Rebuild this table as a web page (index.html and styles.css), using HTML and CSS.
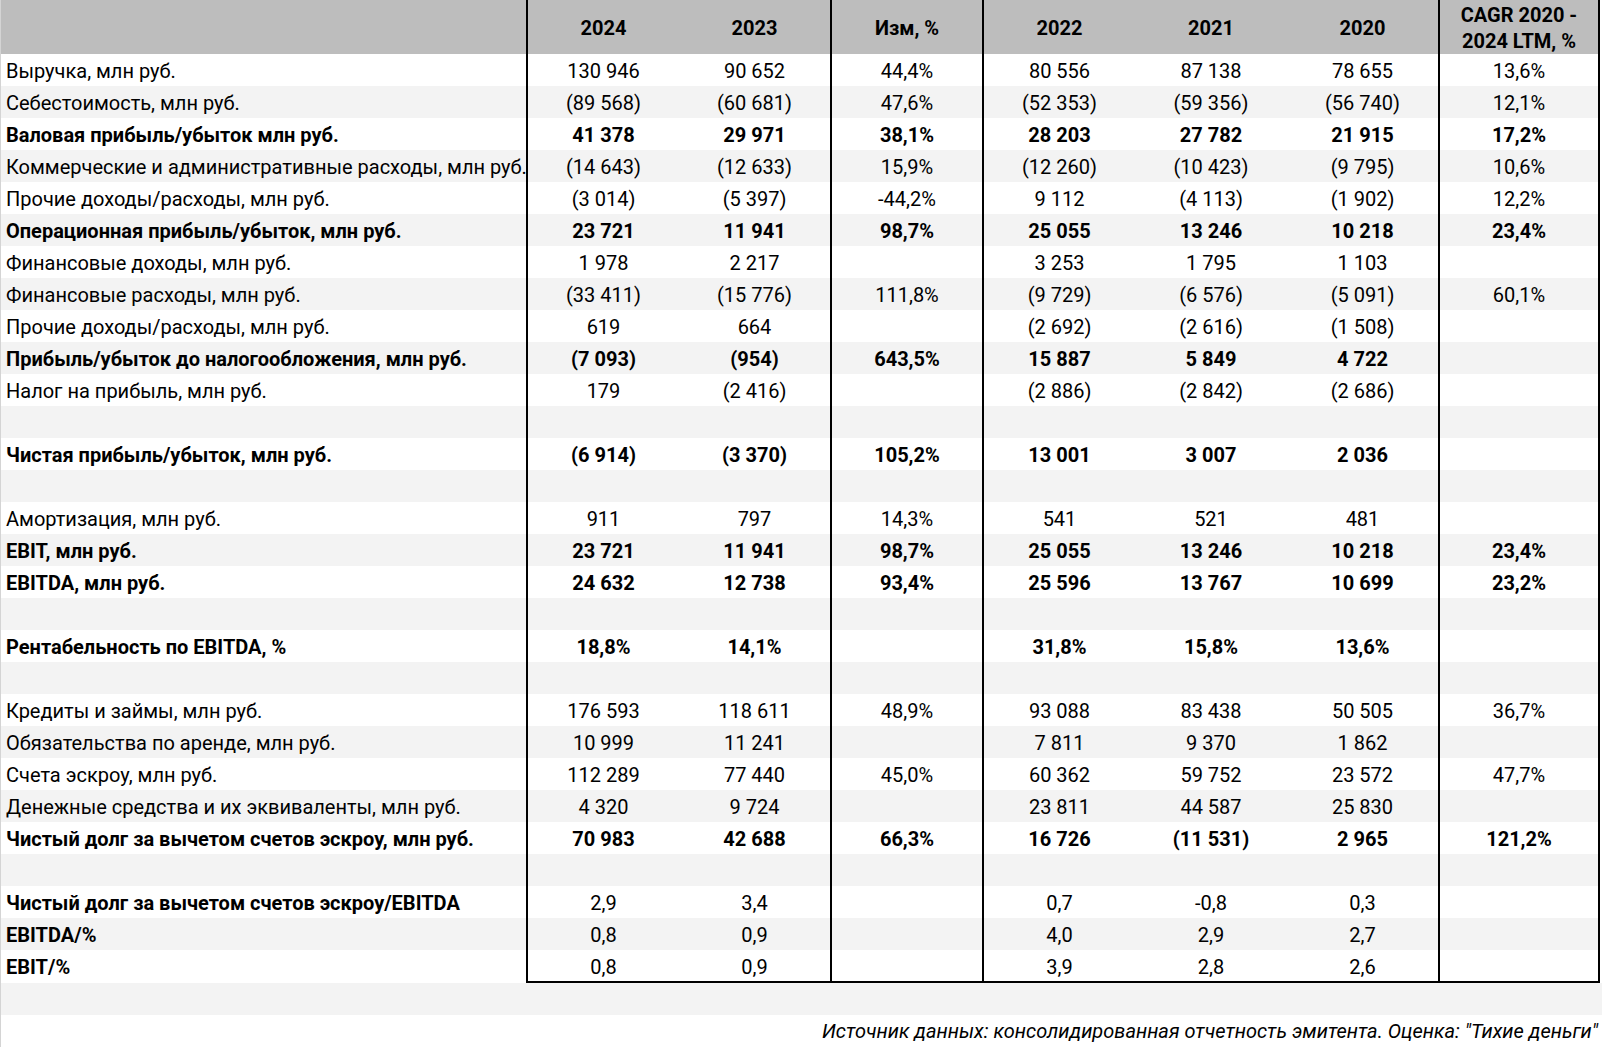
FILE: index.html
```html
<!DOCTYPE html>
<html lang="ru">
<head>
<meta charset="utf-8">
<title>Финансовые показатели</title>
<link rel="stylesheet" href="styles.css">
</head>
<body>
<div class="page">
<table class="fin">
<colgroup>
<col class="c-label"><col class="c-num"><col class="c-num"><col class="c-num"><col class="c-num"><col class="c-num"><col class="c-num"><col class="c-cagr">
</colgroup>
<thead>
<tr>
<th class="lbl"></th>
<th class="gl">2024</th>
<th>2023</th>
<th class="gl">Изм, %</th>
<th class="gl">2022</th>
<th>2021</th>
<th>2020</th>
<th class="gl gr">CAGR 2020 -<br>2024 LTM, %</th>
</tr>
</thead>
<tbody>
<tr><td class="lbl">Выручка, млн руб.</td><td class="gl">130 946</td><td>90 652</td><td class="gl">44,4%</td><td class="gl">80 556</td><td>87 138</td><td>78 655</td><td class="gl gr">13,6%</td></tr>
<tr><td class="lbl">Себестоимость, млн руб.</td><td class="gl">(89 568)</td><td>(60 681)</td><td class="gl">47,6%</td><td class="gl">(52 353)</td><td>(59 356)</td><td>(56 740)</td><td class="gl gr">12,1%</td></tr>
<tr class="b"><td class="lbl">Валовая прибыль/убыток млн руб.</td><td class="gl">41 378</td><td>29 971</td><td class="gl">38,1%</td><td class="gl">28 203</td><td>27 782</td><td>21 915</td><td class="gl gr">17,2%</td></tr>
<tr><td class="lbl">Коммерческие и административные расходы, млн руб.</td><td class="gl">(14 643)</td><td>(12 633)</td><td class="gl">15,9%</td><td class="gl">(12 260)</td><td>(10 423)</td><td>(9 795)</td><td class="gl gr">10,6%</td></tr>
<tr><td class="lbl">Прочие доходы/расходы, млн руб.</td><td class="gl">(3 014)</td><td>(5 397)</td><td class="gl">-44,2%</td><td class="gl">9 112</td><td>(4 113)</td><td>(1 902)</td><td class="gl gr">12,2%</td></tr>
<tr class="b"><td class="lbl">Операционная прибыль/убыток, млн руб.</td><td class="gl">23 721</td><td>11 941</td><td class="gl">98,7%</td><td class="gl">25 055</td><td>13 246</td><td>10 218</td><td class="gl gr">23,4%</td></tr>
<tr><td class="lbl">Финансовые доходы, млн руб.</td><td class="gl">1 978</td><td>2 217</td><td class="gl"></td><td class="gl">3 253</td><td>1 795</td><td>1 103</td><td class="gl gr"></td></tr>
<tr><td class="lbl">Финансовые расходы, млн руб.</td><td class="gl">(33 411)</td><td>(15 776)</td><td class="gl">111,8%</td><td class="gl">(9 729)</td><td>(6 576)</td><td>(5 091)</td><td class="gl gr">60,1%</td></tr>
<tr><td class="lbl">Прочие доходы/расходы, млн руб.</td><td class="gl">619</td><td>664</td><td class="gl"></td><td class="gl">(2 692)</td><td>(2 616)</td><td>(1 508)</td><td class="gl gr"></td></tr>
<tr class="b"><td class="lbl">Прибыль/убыток до налогообложения, млн руб.</td><td class="gl">(7 093)</td><td>(954)</td><td class="gl">643,5%</td><td class="gl">15 887</td><td>5 849</td><td>4 722</td><td class="gl gr"></td></tr>
<tr><td class="lbl">Налог на прибыль, млн руб.</td><td class="gl">179</td><td>(2 416)</td><td class="gl"></td><td class="gl">(2 886)</td><td>(2 842)</td><td>(2 686)</td><td class="gl gr"></td></tr>
<tr><td class="lbl"></td><td class="gl"></td><td></td><td class="gl"></td><td class="gl"></td><td></td><td></td><td class="gl gr"></td></tr>
<tr class="b"><td class="lbl">Чистая прибыль/убыток, млн руб.</td><td class="gl">(6 914)</td><td>(3 370)</td><td class="gl">105,2%</td><td class="gl">13 001</td><td>3 007</td><td>2 036</td><td class="gl gr"></td></tr>
<tr><td class="lbl"></td><td class="gl"></td><td></td><td class="gl"></td><td class="gl"></td><td></td><td></td><td class="gl gr"></td></tr>
<tr><td class="lbl">Амортизация, млн руб.</td><td class="gl">911</td><td>797</td><td class="gl">14,3%</td><td class="gl">541</td><td>521</td><td>481</td><td class="gl gr"></td></tr>
<tr class="b"><td class="lbl">EBIT, млн руб.</td><td class="gl">23 721</td><td>11 941</td><td class="gl">98,7%</td><td class="gl">25 055</td><td>13 246</td><td>10 218</td><td class="gl gr">23,4%</td></tr>
<tr class="b"><td class="lbl">EBITDA, млн руб.</td><td class="gl">24 632</td><td>12 738</td><td class="gl">93,4%</td><td class="gl">25 596</td><td>13 767</td><td>10 699</td><td class="gl gr">23,2%</td></tr>
<tr><td class="lbl"></td><td class="gl"></td><td></td><td class="gl"></td><td class="gl"></td><td></td><td></td><td class="gl gr"></td></tr>
<tr class="b"><td class="lbl">Рентабельность по EBITDA, %</td><td class="gl">18,8%</td><td>14,1%</td><td class="gl"></td><td class="gl">31,8%</td><td>15,8%</td><td>13,6%</td><td class="gl gr"></td></tr>
<tr><td class="lbl"></td><td class="gl"></td><td></td><td class="gl"></td><td class="gl"></td><td></td><td></td><td class="gl gr"></td></tr>
<tr><td class="lbl">Кредиты и займы, млн руб.</td><td class="gl">176 593</td><td>118 611</td><td class="gl">48,9%</td><td class="gl">93 088</td><td>83 438</td><td>50 505</td><td class="gl gr">36,7%</td></tr>
<tr><td class="lbl">Обязательства по аренде, млн руб.</td><td class="gl">10 999</td><td>11 241</td><td class="gl"></td><td class="gl">7 811</td><td>9 370</td><td>1 862</td><td class="gl gr"></td></tr>
<tr><td class="lbl">Счета эскроу, млн руб.</td><td class="gl">112 289</td><td>77 440</td><td class="gl">45,0%</td><td class="gl">60 362</td><td>59 752</td><td>23 572</td><td class="gl gr">47,7%</td></tr>
<tr><td class="lbl">Денежные средства и их эквиваленты, млн руб.</td><td class="gl">4 320</td><td>9 724</td><td class="gl"></td><td class="gl">23 811</td><td>44 587</td><td>25 830</td><td class="gl gr"></td></tr>
<tr class="b"><td class="lbl">Чистый долг за вычетом счетов эскроу, млн руб.</td><td class="gl">70 983</td><td>42 688</td><td class="gl">66,3%</td><td class="gl">16 726</td><td>(11 531)</td><td>2 965</td><td class="gl gr">121,2%</td></tr>
<tr><td class="lbl"></td><td class="gl"></td><td></td><td class="gl"></td><td class="gl"></td><td></td><td></td><td class="gl gr"></td></tr>
<tr><td class="lbl bl">Чистый долг за вычетом счетов эскроу/EBITDA</td><td class="gl">2,9</td><td>3,4</td><td class="gl"></td><td class="gl">0,7</td><td>-0,8</td><td>0,3</td><td class="gl gr"></td></tr>
<tr><td class="lbl bl">EBITDA/%</td><td class="gl">0,8</td><td>0,9</td><td class="gl"></td><td class="gl">4,0</td><td>2,9</td><td>2,7</td><td class="gl gr"></td></tr>
<tr class="last"><td class="lbl bl">EBIT/%</td><td class="gl">0,8</td><td>0,9</td><td class="gl"></td><td class="gl">3,9</td><td>2,8</td><td>2,6</td><td class="gl gr"></td></tr>
</tbody>
</table>
<div class="spacer"></div>
<div class="source">Источник данных: консолидированная отчетность эмитента. Оценка: "Тихие деньги"</div>
</div>
</body>
</html>
```

FILE: styles.css
```css
html, body {
  margin: 0;
  padding: 0;
  background: #ffffff;
}

body {
  font-family: Roboto, "Liberation Sans", Arial, sans-serif;
  font-size: 20px;
  color: #000000;
  width: 1602px;
}

.page {
  width: 1602px;
  border-left: 1px solid #d4d4d4;
  box-sizing: border-box;
}

.fin {
  border-collapse: collapse;
  table-layout: fixed;
  width: 1598px;
}

.c-label { width: 526px; }
.c-num { width: 152px; }
.c-cagr { width: 160px; }

.fin thead tr {
  height: 54px;
}

.fin th {
  background: #bdbdbd;
  padding: 2px 0 0;
  font-weight: 700;
  text-align: center;
  vertical-align: middle;
  line-height: 26px;
}

.fin tbody tr {
  height: 32px;
}

.fin td {
  padding: 2px 0 0;
  text-align: center;
  vertical-align: middle;
  white-space: nowrap;
  line-height: 24px;
}

.fin td.lbl {
  text-align: left;
  padding-left: 5px;
  overflow: visible;
}

.fin tbody tr:nth-child(even) {
  background: #f3f3f3;
}

.fin .gl {
  border-left: 2px solid #000000;
}

.fin .gr {
  border-right: 2px solid #000000;
}

.fin tr.b td {
  font-weight: 700;
}

.fin td.bl {
  font-weight: 700;
}

.fin tr.last td:not(.lbl) {
  border-bottom: 2px solid #000000;
}

.spacer {
  height: 32px;
  background: #f3f3f3;
}

.source {
  height: 32px;
  line-height: 32px;
  text-align: right;
  padding-right: 4px;
  font-style: italic;
}
```
